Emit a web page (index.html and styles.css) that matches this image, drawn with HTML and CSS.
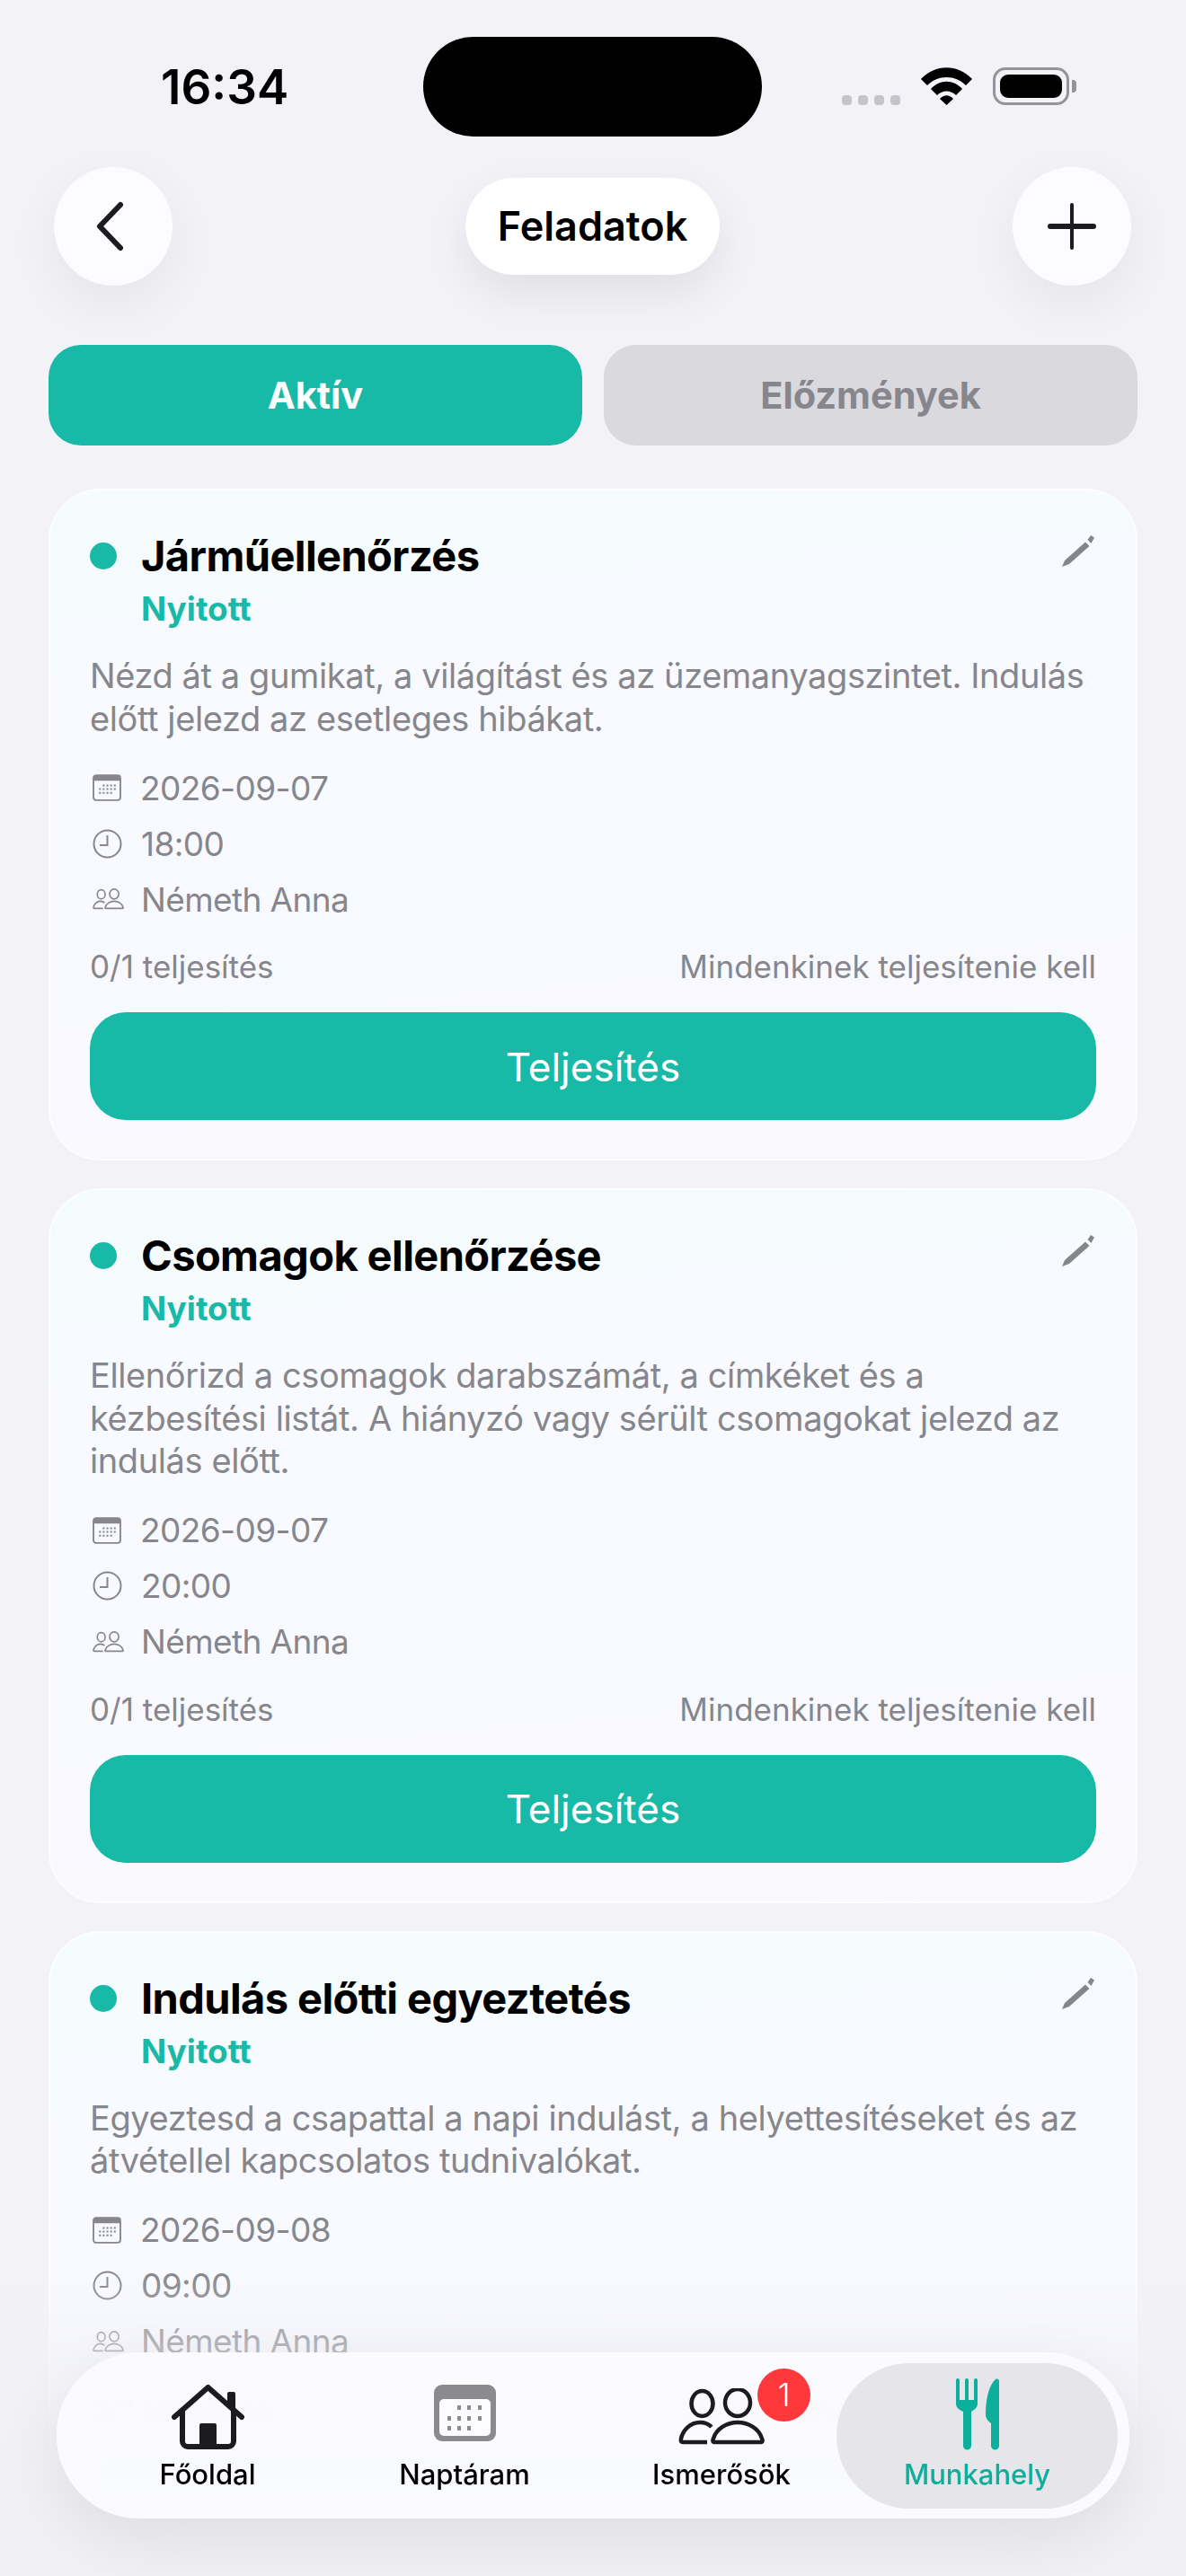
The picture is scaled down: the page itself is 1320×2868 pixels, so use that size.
FILE: index.html
```html
<!DOCTYPE html>
<html lang="hu">
<head>
    <meta charset="UTF-8">
    <meta name="viewport" content="width=device-width, initial-scale=1.0">
    <title>Feladatok</title>
    <link rel="stylesheet" href="styles.css">
</head>
<body>
    <svg class="defs" width="0" height="0">
        <symbol id="i-edit" viewBox="0 0 36 37">
            <path d="M0 37L3 30L26 9.500L30.500 14L8 34Z M28.500 7L32 2L36 4.500L32.500 11Z" fill="currentColor"/>
        </symbol>
        <symbol id="i-cal" viewBox="0 0 31 29">
            <rect x="1" y="1" width="29" height="27" rx="3" fill="none" stroke="currentColor" stroke-width="1.800"/>
            <path d="M1 4a3 3 0 0 1 3-3h23a3 3 0 0 1 3 3v3H1Z" fill="currentColor"/>
            <path d="M11 12h2M15 12h2M19 12h2M23 12h2M7 16h2M11 16h2M15 16h2M19 16h2M23 16h2M7 20h2M11 20h2M15 20h2M19 20h2" stroke="currentColor" stroke-width="2"/>
        </symbol>
        <symbol id="i-clock" viewBox="0 0 33 33">
            <circle cx="16.500" cy="16.500" r="15" fill="none" stroke="currentColor" stroke-width="2"/>
            <path d="M16.500 7V18H8" fill="none" stroke="currentColor" stroke-width="2"/>
        </symbol>
        <symbol id="i-people" viewBox="0 0 96 63">
            <ellipse cx="26.500" cy="17" rx="12" ry="14" fill="none" stroke="currentColor" stroke-width="4.500"/>
            <ellipse cx="66" cy="16" rx="14" ry="15" fill="none" stroke="currentColor" stroke-width="4.500"/>
            <path d="M40 60H92C94 60 94 58 93 56C90 45 78 38 66 38C54 38 42 45 39 56C38 58 38 60 40 60Z" fill="none" stroke="currentColor" stroke-width="4.500"/>
            <path d="M37 43C33 39 28 38 24 38C13 38 5 47 3 56C2.500 59 3 60 6 60H32" fill="none" stroke="currentColor" stroke-width="4.500"/>
        </symbol>
    </svg>

    <div class="status-bar">
        <div class="time">16:34</div>
        <div class="island"></div>
        <div class="status-icons">
            <div class="signal"><span></span><span></span><span></span><span></span></div>
            <svg class="wifi" width="57" height="42" viewBox="0 0 57 42">
                <path d="M0 13C16-4 41-4 57 13L50 20C38 8 19 8 7 20Z M11 24C21 13 36 13 46 24L39 31C33 25 24 25 18 31Z M21 35C26 30 31 30 36 35L28.500 42Z" fill="#000"/>
            </svg>
            <div class="battery"><div class="battery-fill"></div></div>
            <div class="battery-cap"></div>
        </div>
    </div>

    <header class="top-bar">
        <button class="round-btn back-btn">
            <svg width="34" height="56" viewBox="0 0 34 56"><path d="M29 4L6 28L29 52" fill="none" stroke="#1c1c1e" stroke-width="6" stroke-linecap="round" stroke-linejoin="round"/></svg>
        </button>
        <h1 class="page-title">Feladatok</h1>
        <button class="round-btn">
            <svg width="54" height="54" viewBox="0 0 54 54"><path d="M27 3V51" stroke="#1c1c1e" stroke-width="4" stroke-linecap="round"/><path d="M3 27H51" stroke="#1c1c1e" stroke-width="6" stroke-linecap="round"/></svg>
        </button>
    </header>

    <div class="tabs">
        <div class="tab tab-active">Aktív</div>
        <div class="tab">Előzmények</div>
    </div>

    <main class="task-list">
        <section class="card">
            <svg class="edit"><use href="#i-edit"/></svg>
            <div class="card-title"><span class="dot"></span><h2>Járműellenőrzés</h2></div>
            <div class="state">Nyitott</div>
            <p class="desc">Nézd át a gumikat, a világítást és az üzemanyagszintet. Indulás előtt jelezd az esetleges hibákat.</p>
            <div class="meta"><svg class="meta-cal"><use href="#i-cal"/></svg><span>2026-09-07</span></div>
            <div class="meta"><svg class="meta-clock"><use href="#i-clock"/></svg><span>18:00</span></div>
            <div class="meta"><svg class="meta-people"><use href="#i-people"/></svg><span>Németh Anna</span></div>
            <div class="progress"><span>0/1 teljesítés</span><span>Mindenkinek teljesítenie kell</span></div>
            <button class="done-btn">Teljesítés</button>
        </section>

        <section class="card">
            <svg class="edit"><use href="#i-edit"/></svg>
            <div class="card-title"><span class="dot"></span><h2>Csomagok ellenőrzése</h2></div>
            <div class="state">Nyitott</div>
            <p class="desc">Ellenőrizd a csomagok darabszámát, a címkéket és a kézbesítési listát. A hiányzó vagy sérült csomagokat jelezd az indulás előtt.</p>
            <div class="meta"><svg class="meta-cal"><use href="#i-cal"/></svg><span>2026-09-07</span></div>
            <div class="meta"><svg class="meta-clock"><use href="#i-clock"/></svg><span>20:00</span></div>
            <div class="meta"><svg class="meta-people"><use href="#i-people"/></svg><span>Németh Anna</span></div>
            <div class="progress"><span>0/1 teljesítés</span><span>Mindenkinek teljesítenie kell</span></div>
            <button class="done-btn">Teljesítés</button>
        </section>

        <section class="card">
            <svg class="edit"><use href="#i-edit"/></svg>
            <div class="card-title"><span class="dot"></span><h2>Indulás előtti egyeztetés</h2></div>
            <div class="state">Nyitott</div>
            <p class="desc">Egyeztesd a csapattal a napi indulást, a helyettesítéseket és az átvétellel kapcsolatos tudnivalókat.</p>
            <div class="meta"><svg class="meta-cal"><use href="#i-cal"/></svg><span>2026-09-08</span></div>
            <div class="meta"><svg class="meta-clock"><use href="#i-clock"/></svg><span>09:00</span></div>
            <div class="meta"><svg class="meta-people"><use href="#i-people"/></svg><span>Németh Anna</span></div>
            <div class="progress"><span>0/1 teljesítés</span><span>Mindenkinek teljesítenie kell</span></div>
            <button class="done-btn">Teljesítés</button>
        </section>
    </main>

    <div class="bottom-fade"></div>

    <nav class="tab-bar">
        <a class="nav-item">
            <svg class="nav-icon" width="81" height="72" viewBox="0 0 81 72">
                <path d="M3 36L40.500 3L78 36" fill="none" stroke="#1c1c1e" stroke-width="6" stroke-linecap="round" stroke-linejoin="round"/>
                <path d="M62 22V10a2 2 0 0 1 2-2h5a2 2 0 0 1 2 2V30Z" fill="#1c1c1e"/>
                <path d="M12 27V63a6 6 0 0 0 6 6H63a6 6 0 0 0 6-6V27" fill="none" stroke="#1c1c1e" stroke-width="6"/>
                <path d="M31 45a2 2 0 0 1 2-2H48a2 2 0 0 1 2 2V69H31Z" fill="#1c1c1e"/>
            </svg>
            <span>Főoldal</span>
        </a>
        <a class="nav-item">
            <svg class="nav-icon" width="69" height="63" viewBox="0 0 69 63">
                <rect width="69" height="63" rx="9" fill="#8a8a8f"/>
                <rect x="6" y="16" width="57" height="41" rx="5" fill="#fcfcff"/>
                <path d="M26 23h4v5h-4Z M37 23h4v5h-4Z M49 23h4v5h-4Z M15 35h4v5h-4Z M26 35h4v5h-4Z M37 35h4v5h-4Z M49 35h4v5h-4Z M15 46h4v5h-4Z M26 46h4v5h-4Z M37 46h4v5h-4Z" fill="#8a8a8f"/>
            </svg>
            <span>Naptáram</span>
        </a>
        <a class="nav-item">
            <svg class="nav-icon nav-friends"><use href="#i-people"/></svg>
            <span>Ismerősök</span>
            <div class="badge">1</div>
        </a>
        <a class="nav-item nav-active">
            <svg class="nav-icon" width="48" height="80" viewBox="0 0 48 80">
                <path d="M0 2a2 2 0 0 1 4 0V24H10V2a2 2 0 0 1 4 0V24H20V2a2 2 0 0 1 4 0V28C24 33 20 35 17 37V75a4.500 4.500 0 0 1-9 0V37C4 35 0 33 0 28Z" fill="#0dae9b"/>
                <path d="M48 3V75a4.500 4.500 0 0 1-9 0V50C37 48 33 46 33 40C33 25 36 8 44 1C46 0 48 1 48 3Z" fill="#0dae9b"/>
            </svg>
            <span>Munkahely</span>
        </a>
    </nav>
</body>
</html>
```

FILE: styles.css
```css
* {
    box-sizing: border-box;
}
html, body {
    margin: 0;
    height: 2868px;
    overflow: hidden;
}
body {
    position: relative;
    width: 1320px;
    background-color: #f2f2f7;
    font-family: Inter, "Noto Sans", sans-serif;
    color: #000;
}
.defs {
    position: absolute;
}

/* status bar */
.status-bar {
    display: flex;
    align-items: flex-start;
    height: 186px;
    padding: 41px 122px 0 179px;
}
.time {
    width: 292px;
    margin-top: 30px;
    font-size: 53px;
    line-height: 52px;
    font-weight: 600;
}
.island {
    width: 377px;
    height: 111px;
    border-radius: 56px;
    background-color: #000;
}
.status-icons {
    display: flex;
    align-items: flex-end;
    margin-left: auto;
    padding-top: 34px;
    height: 76px;
}
.signal {
    display: flex;
    gap: 7px;
    margin-right: 23px;
}
.signal span {
    width: 11px;
    height: 11px;
    border-radius: 4px;
    background-color: #c4c4ca;
}
.battery {
    width: 85px;
    height: 42px;
    margin-left: 23px;
    padding: 5px;
    border: 3px solid #939398;
    border-radius: 14px;
}
.battery-fill {
    height: 100%;
    border-radius: 9px;
    background-color: #000;
}
.battery-cap {
    width: 5px;
    height: 14px;
    margin: 0 0 14px 3px;
    border-radius: 0 4px 4px 0;
    background-color: #939398;
}

/* header */
.top-bar {
    display: flex;
    align-items: center;
    justify-content: space-between;
    padding: 0 61px 0 60px;
}
.round-btn {
    display: flex;
    align-items: center;
    justify-content: center;
    width: 132px;
    height: 132px;
    padding: 0;
    border: none;
    border-radius: 50%;
    background-color: #fcfcfe;
    box-shadow: 0 20px 60px rgba(0, 0, 0, 0.06);
}
.back-btn svg {
    margin-right: 8px;
}
.page-title {
    margin: 0;
    width: 283px;
    height: 108px;
    border-radius: 54px;
    background-color: #fff;
    text-align: center;
    font-size: 45px;
    line-height: 108px;
    font-weight: 600;
    box-shadow: 0 20px 50px rgba(0, 0, 0, 0.08);
}

/* tabs */
.tabs {
    display: flex;
    gap: 24px;
    margin-top: 66px;
    padding: 0 54px;
}
.tab {
    flex: 1;
    height: 112px;
    border-radius: 36px;
    background-color: #d9d9de;
    color: #86868c;
    text-align: center;
    font-size: 41.500px;
    line-height: 112px;
    font-weight: 700;
}
.tab-active {
    background-color: #18b9a6;
    color: #fff;
}

/* cards */
.task-list {
    display: flex;
    flex-direction: column;
    gap: 31px;
    margin-top: 48px;
    padding: 0 54px;
}
.card {
    position: relative;
    padding: 48px 44px 43px;
    border: 2px solid #fdfdff;
    border-radius: 58px;
    background: linear-gradient(175deg, #f4fcfd 0, #f8faff 28%, #f9f9fe 100%);
}
.edit {
    position: absolute;
    top: 48px;
    right: 46px;
    width: 36px;
    height: 37px;
    color: #85858a;
}
.card-title {
    display: flex;
    align-items: center;
    height: 50px;
}
.dot {
    width: 30px;
    height: 30px;
    margin-right: 27px;
    border-radius: 50%;
    background-color: #18b9a6;
}
.card-title h2 {
    margin: 0;
    font-size: 47px;
    line-height: 50px;
    font-weight: 700;
    letter-spacing: -0.6px;
}
.state {
    margin: 12px 0 0 57px;
    color: #18b9a6;
    font-size: 37px;
    line-height: 44px;
    font-weight: 700;
}
.desc {
    margin: 29px 0 0;
    color: #86868c;
    font-size: 38px;
    line-height: 47.500px;
    letter-spacing: -0.4px;
}
.meta {
    display: flex;
    align-items: center;
    height: 62px;
    color: #86868c;
    font-size: 37px;
    letter-spacing: -0.6px;
}
.desc + .meta {
    margin-top: 22px;
}
.meta svg {
    flex: none;
    margin: 0 20px 0 3px;
}
.meta-cal {
    width: 32px;
    height: 30px;
}
.meta-clock {
    width: 33px;
    height: 33px;
    margin-left: 2px;
}
.meta-people {
    width: 35px;
    height: 24px;
}
.meta span {
    margin-left: 1px;
}
.meta-people + span {
    margin-left: -1px;
}
.progress {
    display: flex;
    justify-content: space-between;
    margin-top: 22px;
    color: #86868c;
    font-size: 35px;
    line-height: 44px;
}
.done-btn {
    display: block;
    width: 100%;
    height: 120px;
    margin-top: 29px;
    padding-top: 2px;
    border: none;
    border-radius: 40px;
    background-color: #18b9a6;
    color: #fff;
    font-family: inherit;
    font-size: 44px;
    font-weight: 400;
}

/* bottom bar */
.bottom-fade {
    position: absolute;
    left: 0;
    right: 0;
    bottom: 0;
    height: 340px;
    background: linear-gradient(180deg, rgba(240, 240, 245, 0) 0, rgba(240, 240, 245, 0.55) 30%, rgba(240, 240, 245, 0.75) 50%, #f0f0f5 75%);
}
.tab-bar {
    position: absolute;
    left: 63px;
    top: 2619px;
    display: flex;
    width: 1194px;
    height: 185px;
    padding: 12px 13px 11px 25px;
    border-radius: 92px;
    background-color: rgba(252, 252, 255, 0.9);
    backdrop-filter: blur(3px);
    box-shadow: 0 24px 70px rgba(0, 0, 0, 0.08);
}
.nav-item {
    position: relative;
    display: flex;
    flex-direction: column;
    align-items: center;
    width: 286px;
    color: #000;
    font-size: 31px;
    font-weight: 500;
}
.nav-icon {
    display: block;
    position: absolute;
    top: 24px;
}
.nav-item span {
    position: absolute;
    top: 105px;
    line-height: 38px;
}
.nav-friends {
    top: 28px;
    width: 96px;
    height: 63px;
    color: #1c1c1e;
}
.badge {
    position: absolute;
    top: 6px;
    left: 183px;
    width: 59px;
    height: 59px;
    border-radius: 50%;
    background-color: #ff383c;
    color: #fff;
    text-align: center;
    font-size: 36px;
    line-height: 59px;
    font-weight: 300;
}
.nav-active {
    width: 313px;
    margin-left: -15px;
    border-radius: 82px;
    background-color: #e6e6ea;
    color: #0dae9b;
}
.nav-active .nav-icon {
    top: 17px;
}
```
